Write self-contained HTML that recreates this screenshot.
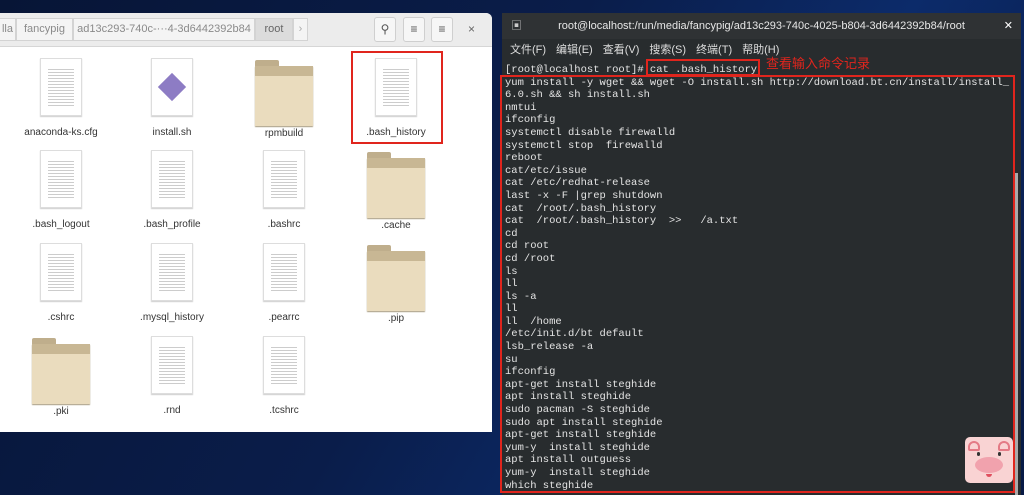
<!DOCTYPE html>
<html><head><meta charset="utf-8"><style>
*{margin:0;padding:0;box-sizing:border-box}
body{width:1024px;height:495px;overflow:hidden;background:linear-gradient(120deg,#071536 0%,#0a1d4a 45%,#0c2b6a 70%,#081a45 100%);position:relative;font-family:"Liberation Sans","Noto Sans CJK SC",sans-serif}
.fm{position:absolute;left:0;top:13px;width:492px;height:419px;background:#fff;border-radius:0 6px 0 0}
.hdr{height:34px;background:#ececec;border-bottom:1px solid #d6d6d6;border-radius:0 6px 0 0;position:relative}
.crumb{position:absolute;top:5px;height:23px;border:1px solid #d3d3d3;background:#f4f4f4;color:#8a8a8a;font-size:11px;line-height:21px;text-align:center}
.btn{position:absolute;top:4px;width:22px;height:25px;border:1px solid #cfcfcf;border-radius:3px;background:#f6f6f6;color:#555;font-size:12px;text-align:center;line-height:23px}
.item{position:absolute;width:100px;text-align:center;font-size:10px;color:#333}
.doc{width:42px;height:58px;margin:0 auto;background:#fff;border:1px solid #ddd;box-shadow:0 1px 1px #ccc;position:relative;
background-image:repeating-linear-gradient(#fff 0 2px,#ccc 2px 3px);background-size:26px 40px;background-position:7px 8px;background-repeat:no-repeat}
.fold{width:58px;height:56px;margin:0 auto;position:relative}
.fold:before{content:"";position:absolute;left:0;top:0;width:24px;height:14px;background:#bfae8c;border-radius:2px 2px 0 0}
.fold:after{content:"";position:absolute;left:0;top:6px;width:58px;height:50px;background:#eadcbe;border-top:10px solid #c8b794;box-shadow:0 1px 1px #a89b80}
.lab{margin-top:11px}
.term{position:absolute;left:502px;top:13px;width:519px;height:482px;background:#282c2e}
.tt{height:26px;background:#2f3234;color:#e6e6e6;font-size:11px;text-align:center;line-height:26px}
.menu{height:20px;color:#ddd;font-size:11px;line-height:22px;padding-left:8px}
.menu span{margin-right:10px}
pre{font-family:"Liberation Mono",monospace;font-size:10.5px;line-height:12.6px;color:#e4e4e4;padding-left:3px;position:absolute;top:51px;left:0}
.red{position:absolute;border:2px solid #e0251d}
</style></head><body>
<div class="fm">
<div class="hdr">
<div class="crumb" style="left:-1px;width:17px">lla</div>
<div class="crumb" style="left:16px;width:57px">fancypig</div>
<div class="crumb" style="left:73px;width:182px">ad13c293-740c-···4-3d6442392b84</div>
<div class="crumb" style="left:255px;width:38px;background:#dcdcdc;color:#666">root</div>
<div class="crumb" style="left:293px;width:15px;color:#aaa">›</div>
<div class="btn" style="left:374px">&#9906;</div>
<div class="btn" style="left:403px">&#8801;</div>
<div class="btn" style="left:431px">&#8801;</div>
<div style="position:absolute;left:468px;top:9px;color:#666;font-size:12px">×</div>
</div>
<div class="item" style="left:11px;top:45px"><div class="doc"></div><div class="lab">anaconda-ks.cfg</div></div>
<div class="item" style="left:122px;top:45px"><div class="doc" style="background:#fff"><div style="position:absolute;left:10px;top:18px;width:20px;height:20px;background:#8d7cc4;transform:rotate(45deg)"></div></div><div class="lab">install.sh</div></div>
<div class="item" style="left:234px;top:47px"><div class="fold"></div><div class="lab" style="margin-top:12px">rpmbuild</div></div>
<div class="item" style="left:346px;top:45px"><div class="doc"></div><div class="lab">.bash_history</div></div>
<div class="item" style="left:11px;top:137px"><div class="doc"></div><div class="lab">.bash_logout</div></div>
<div class="item" style="left:122px;top:137px"><div class="doc"></div><div class="lab">.bash_profile</div></div>
<div class="item" style="left:234px;top:137px"><div class="doc"></div><div class="lab">.bashrc</div></div>
<div class="item" style="left:346px;top:139px"><div class="fold"></div><div class="lab" style="margin-top:12px">.cache</div></div>
<div class="item" style="left:11px;top:230px"><div class="doc"></div><div class="lab">.cshrc</div></div>
<div class="item" style="left:122px;top:230px"><div class="doc"></div><div class="lab">.mysql_history</div></div>
<div class="item" style="left:234px;top:230px"><div class="doc"></div><div class="lab">.pearrc</div></div>
<div class="item" style="left:346px;top:232px"><div class="fold"></div><div class="lab" style="margin-top:12px">.pip</div></div>
<div class="item" style="left:11px;top:325px"><div class="fold"></div><div class="lab" style="margin-top:12px">.pki</div></div>
<div class="item" style="left:122px;top:323px"><div class="doc"></div><div class="lab">.rnd</div></div>
<div class="item" style="left:234px;top:323px"><div class="doc"></div><div class="lab">.tcshrc</div></div>
</div>
<div class="red" style="left:351px;top:51px;width:92px;height:93px"></div>
<div class="term">
<div class="tt"><span style="position:absolute;left:9px;top:0;color:#ccc">&#9635;</span>root@localhost:/run/media/fancypig/ad13c293-740c-4025-b804-3d6442392b84/root<span style="position:absolute;right:8px;color:#fff">✕</span></div>
<div class="menu"><span>文件(F)</span><span>编辑(E)</span><span>查看(V)</span><span>搜索(S)</span><span>终端(T)</span><span>帮助(H)</span></div>
<pre>[root@localhost root]# cat .bash_history
yum install -y wget &amp;&amp; wget -O install.sh http://download.bt.cn/install/install_
6.0.sh &amp;&amp; sh install.sh
nmtui
ifconfig
systemctl disable firewalld
systemctl stop  firewalld
reboot
cat/etc/issue
cat /etc/redhat-release
last -x -F |grep shutdown
cat  /root/.bash_history
cat  /root/.bash_history  &gt;&gt;   /a.txt
cd
cd root
cd /root
ls
ll
ls -a
ll
ll  /home
/etc/init.d/bt default
lsb_release -a
su
ifconfig
apt-get install steghide
apt install steghide
sudo pacman -S steghide
sudo apt install steghide
apt-get install steghide
yum-y  install steghide
apt install outguess
yum-y  install steghide
which steghide</pre>
<div style="position:absolute;left:513px;top:160px;width:3px;height:322px;background:#aaa"></div>
</div>
<div class="red" style="left:646px;top:59px;width:114px;height:17px"></div>
<div style="position:absolute;left:766px;top:53px;color:#e0251d;font-size:13px">查看输入命令记录</div>
<div class="red" style="left:500px;top:75px;width:515px;height:418px"></div>
<div style="position:absolute;left:965px;top:437px;width:48px;height:46px;background:#f9d3d3;border-radius:5px">
<div style="position:absolute;left:3px;top:4px;width:12px;height:10px;border:2px solid #e47a85;border-radius:6px 6px 2px 2px"></div>
<div style="position:absolute;right:3px;top:4px;width:12px;height:10px;border:2px solid #e47a85;border-radius:6px 6px 2px 2px"></div>
<div style="position:absolute;left:12px;top:15px;width:3px;height:4px;background:#333;border-radius:2px"></div>
<div style="position:absolute;right:12px;top:15px;width:3px;height:4px;background:#333;border-radius:2px"></div>
<div style="position:absolute;left:10px;top:20px;width:28px;height:16px;background:#f1a2ad;border-radius:50%"></div>
<div style="position:absolute;left:21px;top:37px;width:6px;height:3px;background:#e0505f;border-radius:0 0 3px 3px"></div>
</div>
</body></html>
